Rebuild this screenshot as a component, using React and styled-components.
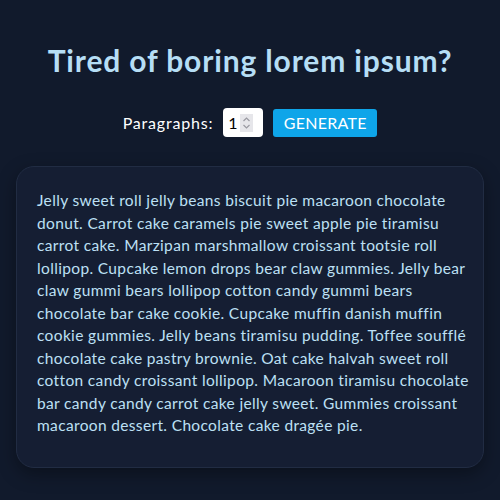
import React from 'react';
import styled, { createGlobalStyle } from 'styled-components';

const Global = createGlobalStyle`
  html, body { margin: 0; padding: 0; background: #111a2c; }
  body { font-family: Lato, "Open Sans", sans-serif; }
`;

const Page = styled.main`
  width: 500px;
  height: 500px;
  box-sizing: border-box;
  padding: 40px 16px 0;
  background: #111a2c;
  display: flex;
  flex-direction: column;
  align-items: center;
`;

const Title = styled.h1`
  margin: 0;
  font-size: 30px;
  font-weight: 700;
  color: #b6def5;
  line-height: 40px;
  letter-spacing: 0.85px;
`;

const Form = styled.form`
  margin-top: 28px;
  display: flex;
  align-items: center;
  gap: 10px;
`;

const Label = styled.label`
  color: #ffffff;
  font-size: 16px;
  letter-spacing: 0.8px;
`;

const NumberBox = styled.div`
  width: 40px;
  height: 29px;
  background: #fff;
  border-radius: 4px;
  display: flex;
  align-items: center;
  padding-left: 5px;
  box-sizing: border-box;
  gap: 2px;
`;

const NumberInput = styled.input`
  width: 10px;
  border: none;
  outline: none;
  padding: 0;
  font-size: 16px;
  font-family: inherit;
  color: #000;
  background: transparent;
`;

const Spinner = styled.span`
  width: 13px;
  height: 18px;
  background: #e6e6ea;
  display: flex;
  align-items: center;
  justify-content: center;
`;

const Button = styled.button`
  height: 28px;
  width: 104px;
  padding: 0;
  border: none;
  border-radius: 3px;
  background: #0ea5e9;
  color: #fff;
  font-family: inherit;
  font-size: 16px;
  letter-spacing: 0.3px;
  text-transform: uppercase;
`;

const Card = styled.article`
  margin-top: 29px;
  width: 468px;
  box-sizing: border-box;
  padding: 22px 17px 30px 20px;
  background: #151e33;
  border: 1px solid #212c43;
  border-radius: 18px;
  box-shadow: 0 6px 18px rgba(0, 0, 0, 0.35);
`;

const Text = styled.p`
  margin: 0;
  color: #bde0f5;
  font-size: 15.5px;
  line-height: 22.5px;
  letter-spacing: 0.35px;
`;

const Line = styled.span`
  display: block;
  white-space: nowrap;
`;

const lines = [
  'Jelly sweet roll jelly beans biscuit pie macaroon chocolate',
  'donut. Carrot cake caramels pie sweet apple pie tiramisu',
  'carrot cake. Marzipan marshmallow croissant tootsie roll',
  'lollipop. Cupcake lemon drops bear claw gummies. Jelly bear',
  'claw gummi bears lollipop cotton candy gummi bears',
  'chocolate bar cake cookie. Cupcake muffin danish muffin',
  'cookie gummies. Jelly beans tiramisu pudding. Toffee soufflé',
  'chocolate cake pastry brownie. Oat cake halvah sweet roll',
  'cotton candy croissant lollipop. Macaroon tiramisu chocolate',
  'bar candy candy carrot cake jelly sweet. Gummies croissant',
  'macaroon dessert. Chocolate cake dragée pie.',
];

export default function App() {
  return (
    <>
      <Global />
      <Page>
        <Title>Tired of boring lorem ipsum?</Title>
        <Form onSubmit={e => e.preventDefault()}>
          <Label htmlFor="amount">Paragraphs:</Label>
          <NumberBox>
            <NumberInput id="amount" defaultValue="1" />
            <Spinner>
              <svg width="9" height="14" viewBox="0 0 9 14" fill="none" stroke="#9a9aa2" strokeWidth="1.2">
                <path d="M1.5 5 L4.5 2 L7.5 5" />
                <path d="M1.5 9 L4.5 12 L7.5 9" />
              </svg>
            </Spinner>
          </NumberBox>
          <Button type="submit">Generate</Button>
        </Form>
        <Card>
          <Text>
            {lines.map((l, i) => <Line key={i}>{l}</Line>)}
          </Text>
        </Card>
      </Page>
    </>
  );
}
